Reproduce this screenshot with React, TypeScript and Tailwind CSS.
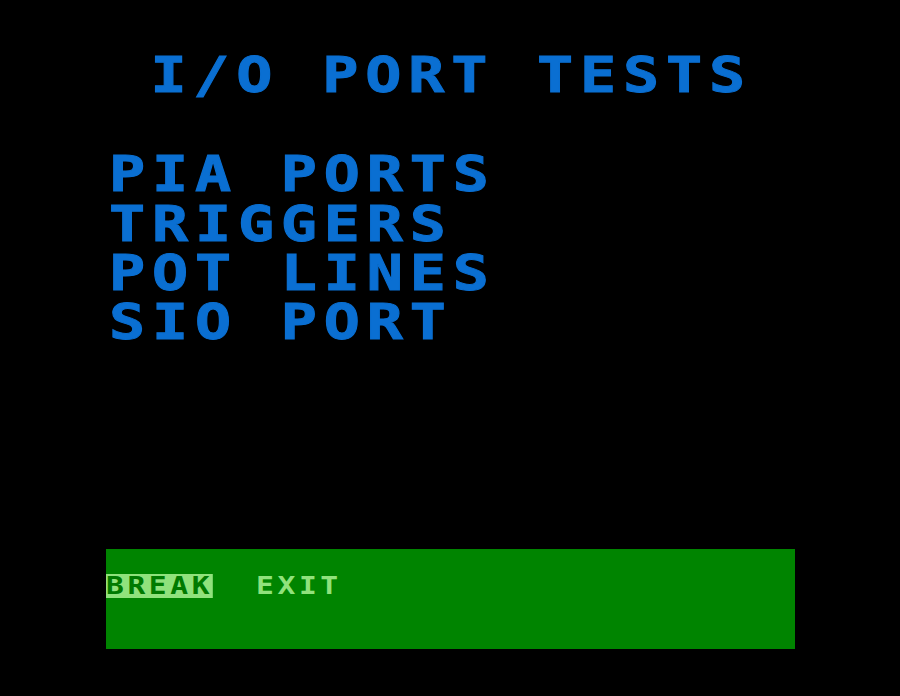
// I/O port test menu, drawn like an 8-bit computer screen

const bigText =
  "font-['DejaVu_Sans_Mono',monospace] font-bold text-[50px] leading-[49.3px] tracking-[5.7px] text-[#0a6fd2] whitespace-pre origin-left scale-x-[1.2] [-webkit-text-stroke:1px_#0a6fd2]";

const menuItems = ["PIA PORTS", "TRIGGERS", "POT LINES", "SIO PORT"];

export default function App() {
  return (
    <div className="w-[900px] h-[696px] bg-black overflow-hidden flex flex-col pl-[106px]">
      <div className={`${bigText} mt-[51px] pl-[37px]`}>I/O PORT TESTS</div>

      <div className="mt-[50px] pl-[3px] flex flex-col">
        {menuItems.map((item) => (
          <div key={item} className={bigText}>
            {item}
          </div>
        ))}
      </div>

      <div className="mt-[202px] w-[689px] h-[100px] bg-[#008400] pt-[25px]">
        <div className="origin-left scale-x-[1.2] font-['DejaVu_Sans_Mono',monospace] font-bold text-[24.7px] leading-[24px] tracking-[3px] whitespace-pre text-[#90e27c] flex">
          <span className="inline-block h-[24px] bg-[#90e27c] text-[#007a00]">BREAK</span>
          <span className="inline-block h-[24px]">{"  EXIT"}</span>
        </div>
      </div>
    </div>
  );
}
